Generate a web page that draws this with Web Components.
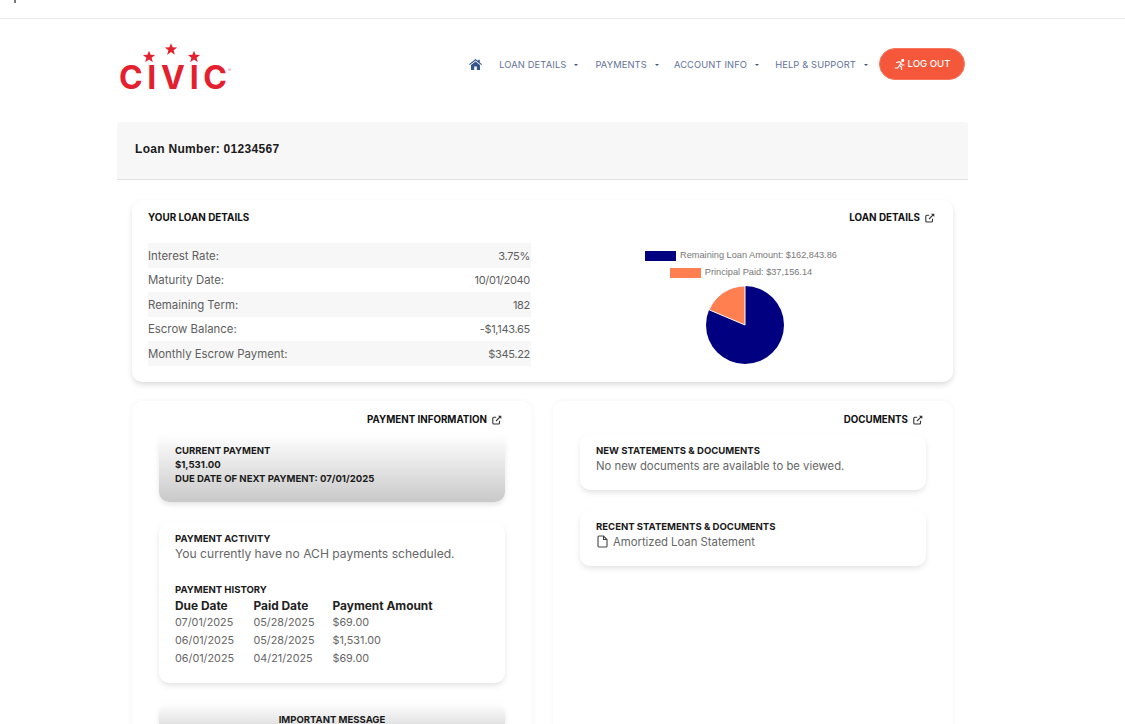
<!DOCTYPE html>
<html lang="en"><head><meta charset="utf-8"><title>Civic</title>
<style>
html,body{margin:0;padding:0;height:724px;overflow:hidden;background:#fff}
body{font-family:Inter,"Noto Sans",sans-serif;color:#555}
</style></head><body>
<top-strip></top-strip>
<loan-page>
  <site-header slot="header"></site-header>
  <loan-banner slot="banner">Loan Number: 01234567</loan-banner>
  <loan-summary slot="summary"></loan-summary>
  <section-panel slot="left" title-text="PAYMENT INFORMATION">
    <info-card variant="grey">
      <card-title>CURRENT PAYMENT</card-title>
      <card-title>$1,531.00</card-title>
      <card-title>DUE DATE OF NEXT PAYMENT: 07/01/2025</card-title>
    </info-card>
    <info-card tight>
      <card-title>PAYMENT ACTIVITY</card-title>
      <card-text large>You currently have no ACH payments scheduled.</card-text>
      <payment-history></payment-history>
    </info-card>
    <info-card variant="grey" center>
      <card-title>IMPORTANT MESSAGE</card-title>
    </info-card>
  </section-panel>
  <section-panel slot="right" title-text="DOCUMENTS">
    <info-card loose>
      <card-title>NEW STATEMENTS &amp; DOCUMENTS</card-title>
      <card-text>No new documents are available to be viewed.</card-text>
    </info-card>
    <info-card loose>
      <card-title>RECENT STATEMENTS &amp; DOCUMENTS</card-title>
      <card-text><svg width="11" height="13" viewBox="0 0 11 13" fill="none" stroke="#444" stroke-width="1.1" style="vertical-align:-2px;margin:0 5px 0 1px"><path d="M1 2a1 1 0 0 1 1-1h4.500L10 4.500V11a1 1 0 0 1-1 1H2a1 1 0 0 1-1-1z"/><path d="M6.500 1v3.500H10"/></svg>Amortized Loan Statement</card-text>
    </info-card>
  </section-panel>
</loan-page>
<script>
const EXT='<svg width="10" height="10" viewBox="0 0 10 10" fill="none" stroke="#333" stroke-width="1.1"><path d="M7.500 5.800V8a1 1 0 0 1-1 1H1.800a1 1 0 0 1-1-1V3.300a1 1 0 0 1 1-1H4.200"/><path d="M4 6 8.600 1.400"/><path d="M6 .8h3.300v3.300z" fill="#333" stroke="none"/></svg>';
const STAR='points="0,-6.300 1.600,-2.200 6.100,-2 2.600,.8 3.800,5.200 0,2.600 -3.800,5.200 -2.600,.8 -6.100,-2 -1.600,-2.200"';
function def(name,html){
  customElements.define(name,class extends HTMLElement{
    constructor(){super();this.attachShadow({mode:'open'}).innerHTML=typeof html==='function'?html(this):html;}
  });
}
def('top-strip',`<style>:host{display:block;height:18px;border-bottom:1px solid #ececec;position:relative}
i{position:absolute;left:14px;top:0;width:2px;height:3px;background:#777}</style><i></i>`);

def('loan-page',`<style>:host{display:block;width:851px;margin-left:117px}
.grid{display:grid;grid-template-columns:400px 400px;column-gap:21px;padding:0 15px}
.body{padding-top:20px}</style>
<slot name="header"></slot><slot name="banner"></slot>
<div class="body"><slot name="summary"></slot><div class="grid"><slot name="left"></slot><slot name="right"></slot></div></div>`);

def('site-logo',`<style>:host{display:block;width:118px;height:58px}svg{display:block}</style>
<svg width="118" height="58" viewBox="0 0 118 58" fill="#e5202e">
<polygon transform="translate(30,14)" ${STAR}/>
<polygon transform="translate(52,6.500)" ${STAR}/>
<polygon transform="translate(75,14)" ${STAR}/>
<text x="0" y="46" font-family="Inter,sans-serif" font-weight="700" font-size="32" textLength="108" lengthAdjust="spacing">CIVIC</text>
<text x="109" y="29" font-family="Inter,sans-serif" font-size="5" fill="#e58a90">®</text>
</svg>`);

def('nav-item',`<style>:host{display:inline-flex;align-items:center;font:400 9.300px/1 Inter,sans-serif;color:#5f7299;letter-spacing:.15px;white-space:nowrap;padding-top:2px}
i{display:block;width:0;height:0;border:2.200px solid transparent;border-top:2.600px solid #44587f;border-bottom:0;margin-left:8px}</style><slot></slot><i></i>`);

def('logout-button',`<style>:host{display:flex;align-items:center;justify-content:center;gap:2px;width:86px;height:32px;border-radius:16px;background:#f5573a;color:#fff;font:500 9.600px/1 Inter,sans-serif;box-sizing:border-box;border:1px solid #f8785f}</style>
<svg width="12" height="11" viewBox="0 0 12 11" fill="none" stroke="#fff" stroke-width="1.2" stroke-linecap="round" stroke-linejoin="round"><circle cx="8.700" cy="1.500" r="1" fill="#fff"/><path d="M2.500 3.500 5 2.800l2 .8-1.500 3 2 1.400v2.500"/><path d="M7 4.500l1 1.300 2 .2"/><path d="M5 7 3.800 8.800 1.200 9"/></svg><slot></slot>`);

def('site-header',`<style>:host{display:flex;justify-content:space-between;height:103px;box-sizing:border-box;padding:24px 3px 0 2px}
nav{display:flex;align-items:center;height:32px;margin-top:5px}
nav-item.a{margin-left:17px}nav-item.b{margin-left:17px}nav-item.c{margin-left:15px}nav-item.d{margin-left:16px}
logout-button{margin-left:11px}
svg.h{display:block}</style>
<site-logo></site-logo>
<nav>
<svg class="h" width="13" height="11" viewBox="0 0 13 11" fill="#34588c"><path d="M6.500 0 0 5.300l.7.8L6.500 1.500l5.800 4.600.7-.8-2.200-1.800V.7H9.200v1.200z"/><path d="M6.500 2.500 2 6.100V11h3.200V7.500h2.600V11H11V6.100z"/></svg>
<nav-item class="a">LOAN DETAILS</nav-item>
<nav-item class="b">PAYMENTS</nav-item>
<nav-item class="c">ACCOUNT INFO</nav-item>
<nav-item class="d">HELP &amp; SUPPORT</nav-item>
<logout-button>LOG OUT</logout-button>
</nav>`);

def('loan-banner',`<style>:host{display:flex;align-items:center;height:58px;box-sizing:border-box;padding:0 18px 4px;background:#f7f7f7;border-bottom:1px solid #e2e2e2;border-radius:3px 3px 0 0;font:700 12px/1 "Liberation Sans",sans-serif;color:#1a1a1a;letter-spacing:.3px}</style><slot></slot>`);

def('summary-row',`<style>:host{display:flex;justify-content:space-between;align-items:center;height:24.500px;font:400 11.400px/1 Inter,sans-serif;color:#5e5e5e;padding:2px 1px 0 0;box-sizing:border-box}
:host(:nth-child(odd)){background:#f7f7f7}
::slotted([slot=v]){font-size:11px;letter-spacing:-.3px}</style><span><slot name="k"></slot></span><span><slot name="v"></slot></span>`);

def('pie-chart',`<style>:host{display:block;width:300px;font:9.200px/1 "Liberation Sans",sans-serif;color:#777}
.l{display:flex;align-items:center;justify-content:center;gap:4px;height:10px;margin-bottom:7px;padding-right:8px}
i{display:block;width:31px;height:10px}svg{display:block;margin:1px auto 0}</style>
<div class="l"><i style="background:#000080"></i>Remaining Loan Amount: $162,843.86</div>
<div class="l"><i style="background:#ff7f50"></i>Principal Paid: $37,156.14</div>
<svg width="80" height="80" viewBox="-40 -40 80 80"><circle r="39" fill="#000080"/><path d="M0 0V-39A39 39 0 0 0-35.900-15.200Z" fill="#ff7f50" stroke="#fff" stroke-width="1"/></svg>`);

def('loan-summary',`<style>:host{display:block;margin:0 15px 19px;height:182px;border-radius:10px;background:#fff;box-shadow:0 3px 6px -1px rgba(0,0,0,.17);box-sizing:border-box;padding:12px 16px 0}
.h{display:flex;justify-content:space-between;align-items:center;height:11px;font:700 9.900px/1 Inter,sans-serif;color:#111}
.r{display:flex;align-items:center;gap:5px;margin-right:2px}
.c{display:flex;margin-top:20px}
.t{width:383px}.p{margin-top:8px;margin-left:64px}</style>
<div class="h"><span>YOUR LOAN DETAILS</span><span class="r">LOAN DETAILS ${EXT}</span></div>
<div class="c"><div class="t">
<summary-row><span slot="k">Interest Rate:</span><span slot="v">3.75%</span></summary-row>
<summary-row><span slot="k">Maturity Date:</span><span slot="v">10/01/2040</span></summary-row>
<summary-row><span slot="k">Remaining Term:</span><span slot="v">182</span></summary-row>
<summary-row><span slot="k">Escrow Balance:</span><span slot="v">-$1,143.65</span></summary-row>
<summary-row><span slot="k">Monthly Escrow Payment:</span><span slot="v">$345.22</span></summary-row>
</div><div class="p"><pie-chart></pie-chart></div></div>`);

def('section-panel',el=>`<style>:host{display:block;height:340px;background:#fff;border-radius:10px;box-shadow:0 0 5px rgba(0,0,0,.05);box-sizing:border-box;padding:13px 27px 0}
.h{display:flex;justify-content:flex-end;align-items:center;gap:5px;height:11px;font:700 9.750px/1 Inter,sans-serif;color:#111;padding-right:3px;margin-bottom:9px}
.s{display:flex;flex-direction:column;gap:20px}</style>
<div class="h">${el.getAttribute('title-text')} ${EXT}</div><div class="s"><slot></slot></div>`);

def('info-card',`<style>:host{display:block;border-radius:10px;background:#fff;box-shadow:0 3px 6px -1px rgba(0,0,0,.13);box-sizing:border-box;padding:10px 16px 16px;color:#111}
:host([variant=grey]){background:linear-gradient(#fff,#c9c9c9)}
:host([center]){text-align:center}
:host([tight]){padding-bottom:15px}
:host([loose]){padding-bottom:16px}</style><slot></slot>`);

def('card-title',`<style>:host{display:block;font:700 9.550px/14px Inter,sans-serif;color:#1a1a1a}</style><slot></slot>`);
def('card-text',`<style>:host{display:block;font:400 11.300px/15px Inter,sans-serif;color:#666;padding-top:1px}
:host([large]){font-size:12.100px;padding-top:0}</style><slot></slot>`);

def('payment-history',`<style>:host{display:block;margin-top:22px}
.g{display:grid;grid-template-columns:78.500px 79px 1fr;font:400 10.800px/18px Inter,sans-serif;color:#666}
.g b{font-weight:700;font-size:11.900px;color:#222;line-height:17px}
card-title{line-height:14px}</style>
<card-title>PAYMENT HISTORY</card-title>
<div class="g"><b>Due Date</b><b>Paid Date</b><b>Payment Amount</b>
<span>07/01/2025</span><span>05/28/2025</span><span>$69.00</span>
<span>06/01/2025</span><span>05/28/2025</span><span>$1,531.00</span>
<span>06/01/2025</span><span>04/21/2025</span><span>$69.00</span></div>`);
</script>
</body></html>
